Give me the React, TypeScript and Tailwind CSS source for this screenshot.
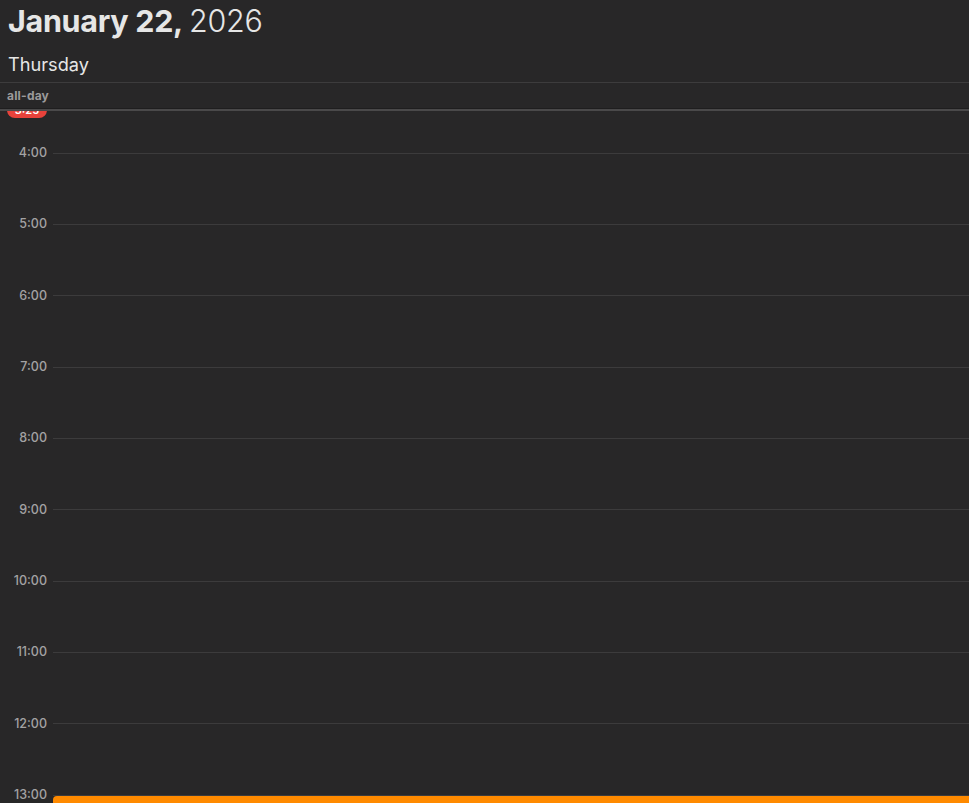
import React from "react"

const HOUR_H = 71.33
const hours = [3, 4, 5, 6, 7, 8, 9, 10, 11, 12, 13, 14]

// Day view of a calendar, scrolled to early morning
export default function App() {
    return (
        <div
            className="flex h-[803px] w-[969px] flex-col overflow-hidden bg-[#282728] text-[#e6e6e6]"
            style={{ fontFamily: "Inter, 'Noto Sans', sans-serif" }}
        >
            {/* Title */}
            <div className="px-2 pt-[1px]">
                <h1 className="flex text-[30.5px] leading-[40px] tracking-[-0.3px]">
                    <span className="font-bold">January 22,</span>
                    <span className="ml-[6px] font-light">2026</span>
                </h1>
                <p className="mt-[8px] text-[18.2px] leading-[30px] font-normal">Thursday</p>
            </div>

            {/* all-day row */}
            <div className="mt-[3px] flex h-[26px] items-center border-t border-[#3d3c3d] px-[7px] pt-[1px]">
                <span className="text-[12px] font-bold tracking-[0.2px] text-[#9b9a9b]">all-day</span>
            </div>
            <div className="h-[1px] bg-[#1f1e1f]" />
            <div className="h-[2px] bg-[#4a494a]" />

            {/* Hour grid */}
            <div className="relative flex-1 overflow-hidden">
                <div className="-mt-[29px]">
                    {hours.map((h) => (
                        <div key={h} className="flex" style={{ height: HOUR_H }}>
                            <div className="-mt-[8px] flex h-[16px] w-full items-center">
                                <span className="w-[47px] text-right text-[12.5px] font-medium text-[#a3a2a3]">
                                    {h}:00
                                </span>
                                <div className="ml-[6px] h-[1px] flex-1 bg-[#3c3b3c]" />
                            </div>
                        </div>
                    ))}
                </div>

                {/* current time badge */}
                <div className="absolute left-[7px] top-[-9px] flex h-[16px] w-[40px] items-center justify-center rounded-full bg-[#e8423b] text-[11px] font-semibold text-white">
                    3:25
                </div>

                {/* event starting at 13:00 */}
                <div className="absolute left-[53px] right-0 top-[685px] h-[40px] rounded-tl-[4px] bg-[#ff8a00]" />
            </div>
        </div>
    )
}
